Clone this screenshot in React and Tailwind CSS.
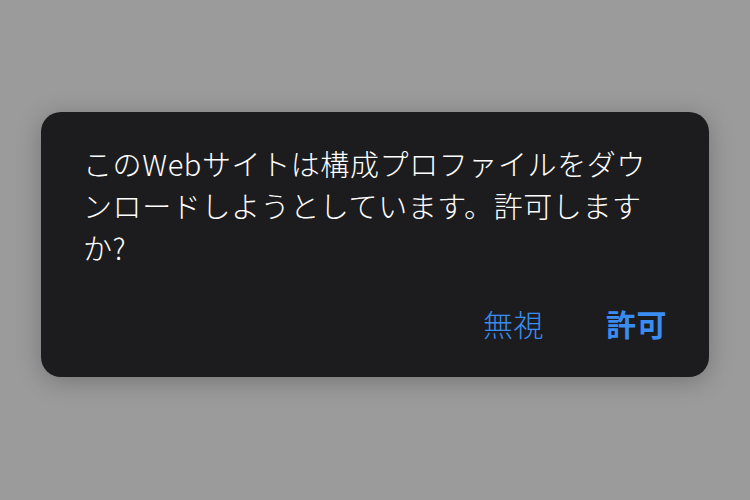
export default function App() {
  return (
    <div className="w-[750px] h-[500px] bg-[#9b9b9b] pt-[112px] px-[41px]" style={{ fontFamily: '"Noto Sans CJK JP", "Noto Sans", sans-serif' }}>
      <div className="w-[668px] h-[265px] bg-[#1c1c1e] rounded-[20px] shadow-[0_4px_24px_rgba(0,0,0,0.25)] pt-[30px] px-[42px] flex flex-col">
        <p className="text-white text-[29px] leading-[42px] tracking-[0.6px] font-light">
          このWebサイトは構成プロファイルをダウンロードしようとしています。許可しますか?
        </p>
        <div className="flex justify-end gap-[62px] mt-auto mb-[33px] text-[30px] leading-[42px] text-[#3b8cf0] tracking-[0.5px]">
          <button className="font-light">無視</button>
          <button className="font-bold">許可</button>
        </div>
      </div>
    </div>
  )
}
